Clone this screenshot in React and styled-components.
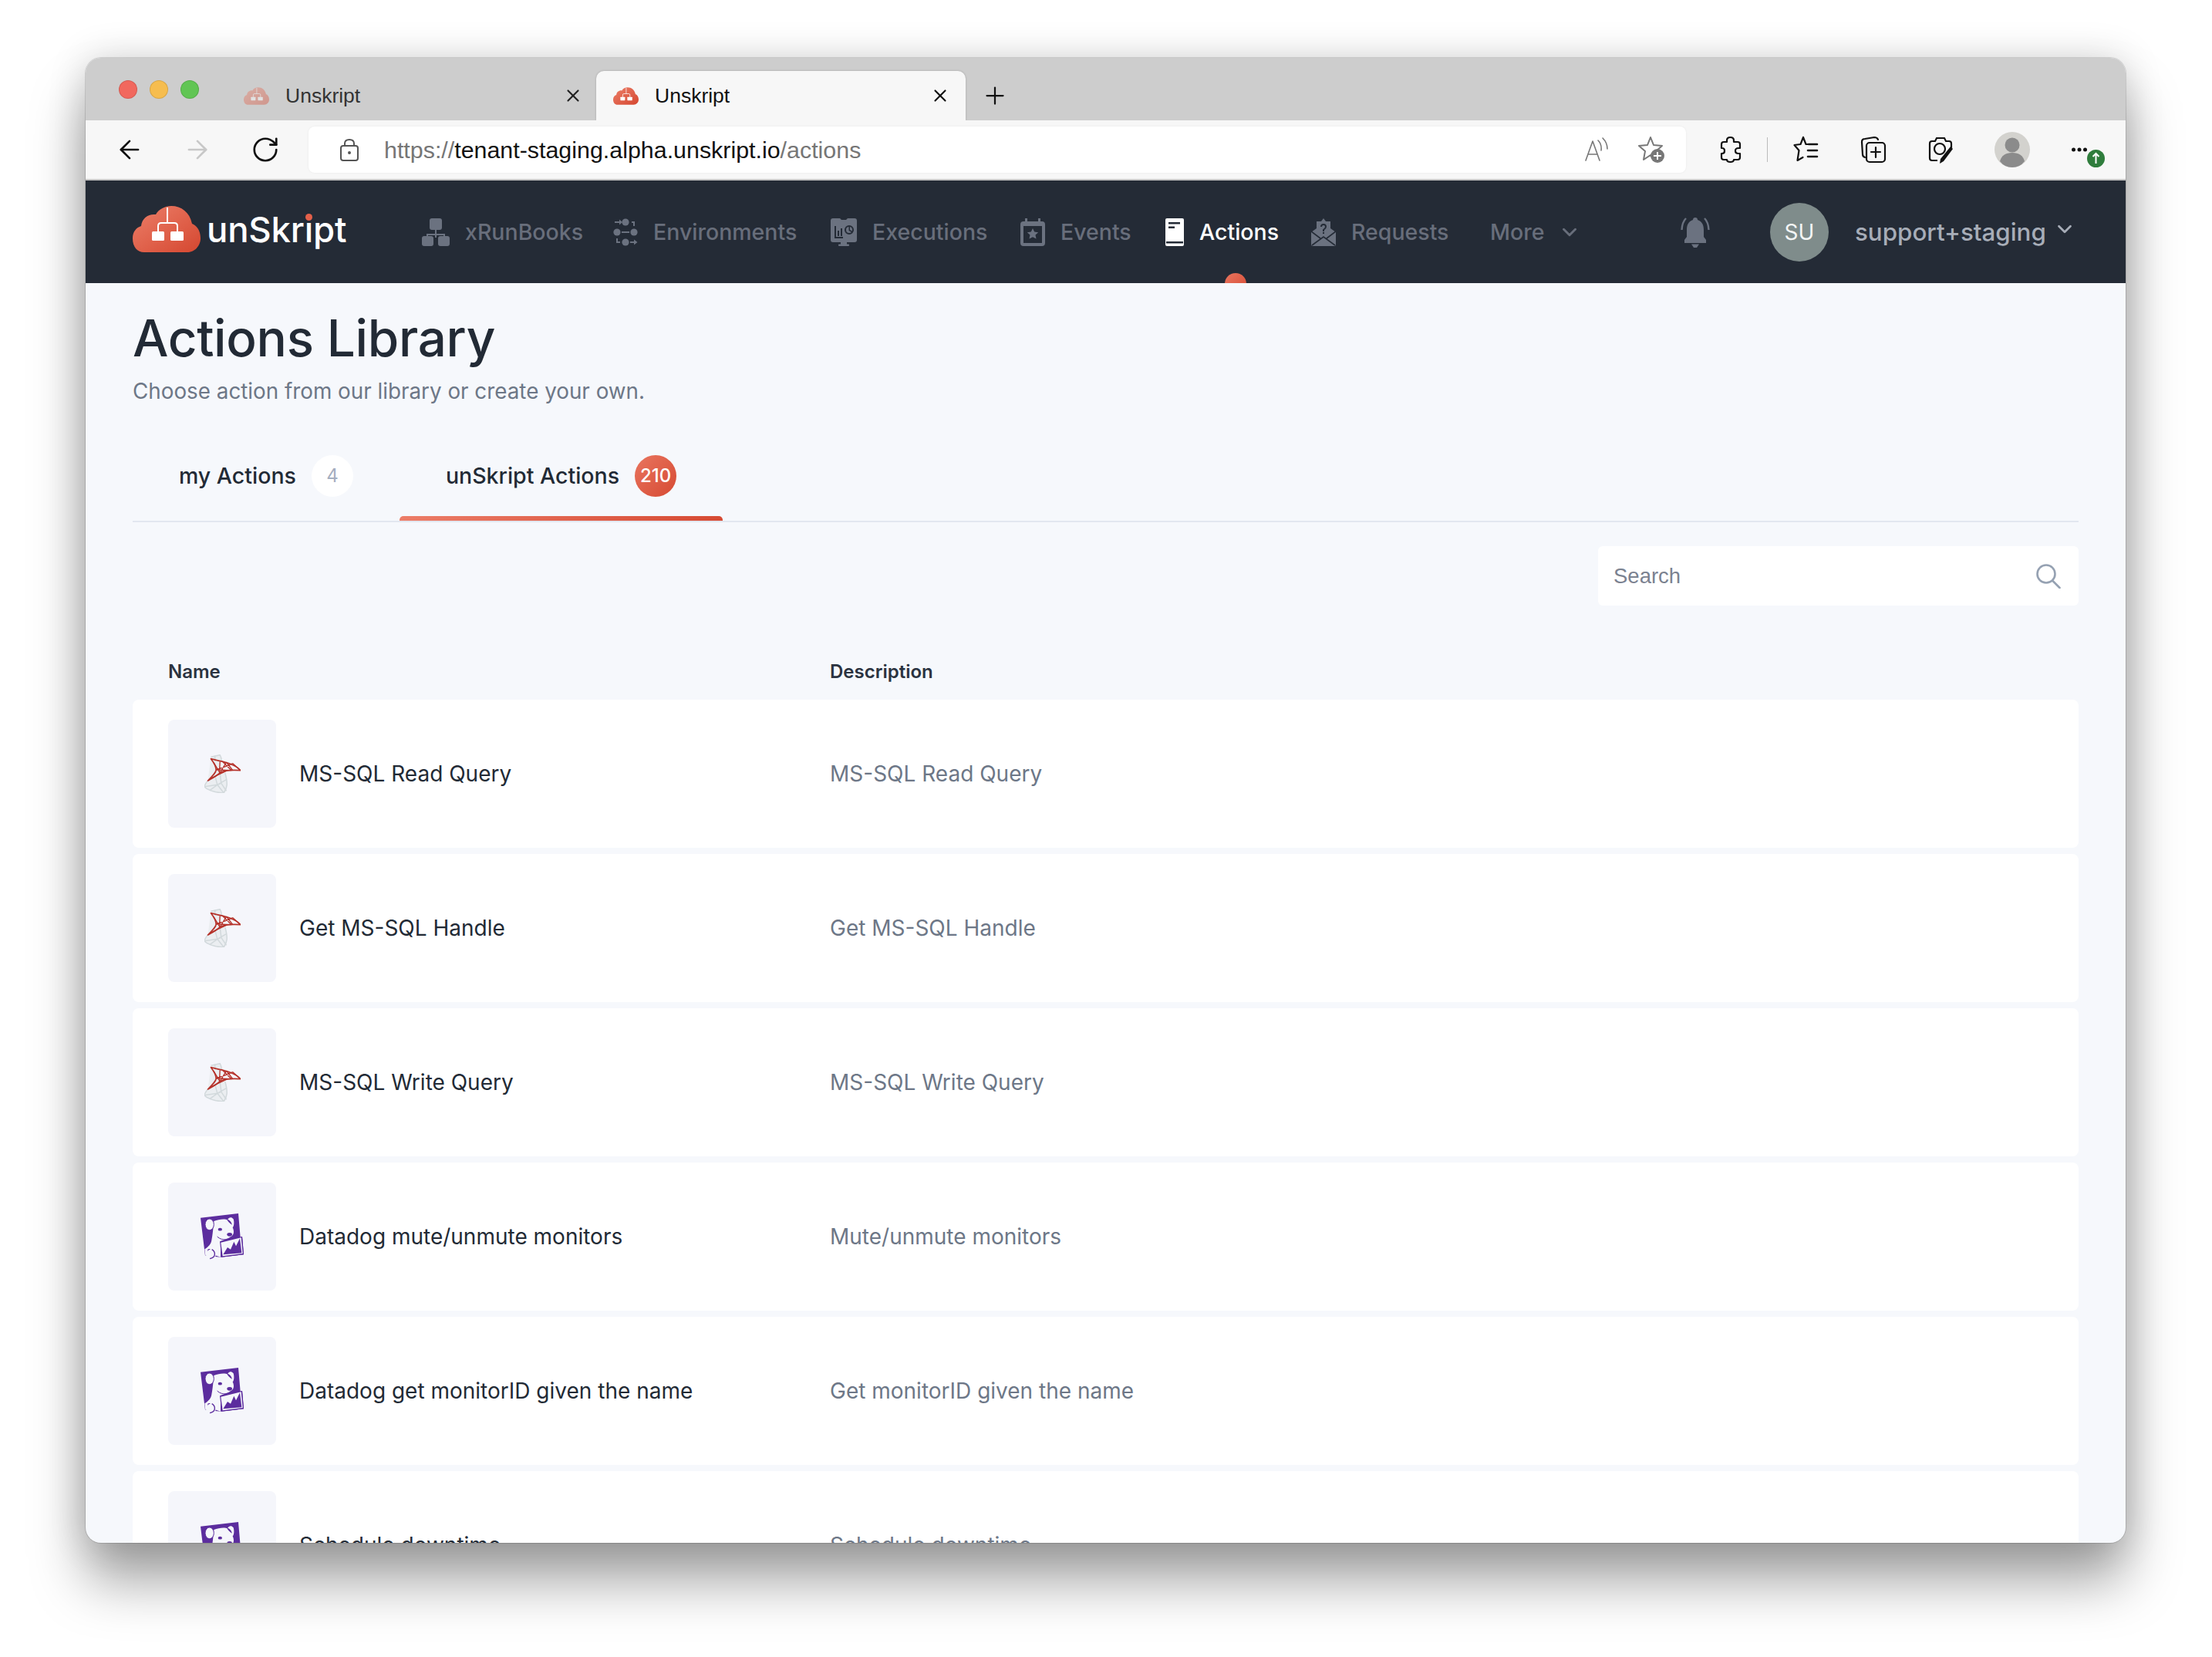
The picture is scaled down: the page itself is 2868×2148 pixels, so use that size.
import React from 'react'
import styled, { createGlobalStyle } from 'styled-components'
import { ArrowLeft, ArrowRight, RotateCw, X, Plus, ChevronDown } from 'lucide-react'

const GlobalStyle = createGlobalStyle`
  html, body { margin: 0; padding: 0; background: #fff; }
  * { box-sizing: border-box; }
  body { font-family: Inter, "Liberation Sans", sans-serif; }
`

const Stage = styled.div`
  width: 2868px;
  height: 2148px;
  padding: 75px 112px 0 111px;
  overflow: hidden;
  background: #fff;
`

const Window = styled.div`
  width: 2645px;
  height: 1925px;
  border-radius: 20px;
  overflow: hidden;
  display: flex;
  flex-direction: column;
  background: #f6f8fc;
  box-shadow: 0 0 0 1px rgba(0, 0, 0, 0.12), 0 50px 70px rgba(0, 0, 0, 0.36), 0 0 50px rgba(0, 0, 0, 0.16);
`

const TabStrip = styled.div`
  height: 81px;
  flex: none;
  background: #cdcdcd;
  display: flex;
  align-items: flex-end;
`

const Lights = styled.div`
  width: 183px;
  height: 81px;
  flex: none;
  display: flex;
  gap: 16px;
  padding: 29px 0 0 43px;
`

const Light = styled.span`
  width: 24px;
  height: 24px;
  border-radius: 50%;
  background: ${(p) => p.$color};
  border: 1px solid rgba(0, 0, 0, 0.12);
`

const Tab = styled.div`
  width: 479px;
  height: 64px;
  flex: none;
  display: flex;
  align-items: center;
  padding: 0 ${(p) => (p.$active ? '20px' : '17px')} 0 22px;
  gap: 21px;
  border-radius: 10px 10px 0 0;
  background: ${(p) => (p.$active ? '#f7f7f7' : 'transparent')};
  box-shadow: ${(p) => (p.$active ? '0 0 3px rgba(0, 0, 0, 0.2)' : 'none')};
  color: ${(p) => (p.$active ? '#111' : '#333')};
  font-family: "Liberation Sans", sans-serif;
  font-size: 26.5px;
  svg { flex: none; }
  span { flex: 1; }
`

const NewTab = styled.div`
  margin-left: 20px;
  height: 64px;
  display: flex;
  align-items: center;
  color: #111;
`

const Toolbar = styled.div`
  height: 78px;
  flex: none;
  background: #f7f7f7;
  border-bottom: 2px solid #c6c6c6;
  display: flex;
  align-items: center;
  padding-left: 38px;
`

const NavButton = styled.div`
  width: 88px;
  flex: none;
  color: ${(p) => (p.$off ? '#c8c8c8' : '#111')};
  display: flex;
`

const UrlBar = styled.div`
  width: 1786px;
  height: 60px;
  flex: none;
  margin-left: -13px;
  background: #fff;
  border-radius: 8px;
  box-shadow: 0 0 3px rgba(0, 0, 0, 0.06);
  display: flex;
  align-items: center;
  padding: 0 28px 0 40px;
  font-family: "Liberation Sans", sans-serif;
  font-size: 30.4px;
  color: #767676;
`

const UrlText = styled.div`
  flex: 1;
  margin-left: 32px;
  b { font-weight: 400; color: #111; }
`

const ToolIcons = styled.div`
  flex: 1;
  display: flex;
  align-items: center;
  padding-left: 42px;
`

const ToolIcon = styled.div`
  width: ${(p) => p.$w || 88}px;
  display: flex;
  flex: none;
`

const ToolSep = styled.span`
  width: 1px;
  height: 32px;
  background: #bbb;
  flex: none;
  margin: 0 32px 0 0;
`

const Header = styled.header`
  height: 133px;
  flex: none;
  background: #242b36;
  display: flex;
  align-items: center;
  padding-left: 61px;
  overflow: hidden;
`

const Logo = styled.div`
  display: flex;
  align-items: center;
  gap: 8px;
  width: 375px;
  flex: none;
  margin-top: -7px;
`

const LogoWord = styled.span`
  font-size: 45.5px;
  font-weight: 500;
  color: #fff;
  letter-spacing: -0.2px;
  em {
    font-style: normal;
    position: relative;
  }
  em::after {
    content: '';
    position: absolute;
    left: 1px;
    top: 7px;
    width: 9px;
    height: 9px;
    border-radius: 50%;
    background: #e4604a;
  }
`

const Nav = styled.nav`
  display: flex;
  align-items: center;
`

const NavItem = styled.div`
  position: relative;
  display: flex;
  align-items: center;
  gap: ${(p) => p.$gap || 20}px;
  width: ${(p) => p.$w}px;
  height: 36px;
  flex: none;
  font-size: 28.5px;
  font-weight: 500;
  color: ${(p) => (p.$active ? '#fff' : '#686e7b')};
  svg { flex: none; }
`

const NavDot = styled.span`
  position: absolute;
  left: 77px;
  top: 71px;
  width: 28px;
  height: 28px;
  border-radius: 50%;
  background: linear-gradient(135deg, #e9755f, #d64a33);
`

const Bell = styled.div`
  display: flex;
  margin-left: 113px;
  width: 116px;
  flex: none;
`

const Avatar = styled.div`
  width: 76px;
  height: 76px;
  border-radius: 50%;
  flex: none;
  background: #7f8c8b;
  color: #f3f5f5;
  font-size: 28px;
  display: flex;
  align-items: center;
  justify-content: center;
`

const UserName = styled.div`
  margin-left: 34px;
  font-size: 31.3px;
  font-weight: 500;
  color: #a7adb8;
  display: flex;
  align-items: center;
  gap: 9px;
  svg { margin-top: -8px; }
`

const Main = styled.main`
  padding: 34px 61px 0;
`

const Title = styled.h1`
  margin: 0;
  font-size: 65.5px;
  line-height: 76px;
  font-weight: 500;
  color: #222a35;
  letter-spacing: -0.3px;
`

const Subtitle = styled.p`
  margin: 12px 0 0;
  font-size: 27.8px;
  line-height: 36px;
  color: #6d7787;
`

const Tabs = styled.div`
  display: flex;
  margin-top: 49px;
  height: 103px;
  border-bottom: 2px solid #e2e7f0;
`

const TabItem = styled.div`
  position: relative;
  display: flex;
  align-items: center;
  gap: 20px;
  height: 101px;
  padding: 0 60px 16px;
  font-size: 28.5px;
  font-weight: 500;
  color: #222a35;
  &::after {
    content: '';
    display: ${(p) => (p.$active ? 'block' : 'none')};
    position: absolute;
    left: 0;
    right: 0;
    bottom: 0;
    height: 6px;
    border-radius: 5px 5px 0 0;
    background: linear-gradient(90deg, #ec7d68, #d64a33);
  }
`

const Badge = styled.span`
  width: 54px;
  height: 54px;
  border-radius: 50%;
  display: flex;
  align-items: center;
  justify-content: center;
  font-size: 24px;
  font-weight: ${(p) => (p.$active ? 500 : 400)};
  color: ${(p) => (p.$active ? '#fff' : '#a4aec0')};
  background: ${(p) => (p.$active ? 'linear-gradient(135deg, #e9755f, #d64a33)' : '#fff')};
`

const SearchRow = styled.div`
  display: flex;
  justify-content: flex-end;
  margin-top: 31px;
`

const SearchBox = styled.div`
  width: 623px;
  height: 77px;
  background: #fff;
  border-radius: 6px;
  display: flex;
  align-items: center;
  justify-content: space-between;
  padding: 0 23px 0 20px;
  font-family: "Liberation Sans", sans-serif;
  font-size: 27.5px;
  color: #7b8290;
`

const TableHead = styled.div`
  display: grid;
  grid-template-columns: 858px 1fr;
  padding-left: 46px;
  margin-top: 71px;
  height: 51px;
  font-size: 24px;
  font-weight: 600;
  line-height: 30px;
  color: #2b3340;
`

const Rows = styled.div`
  display: flex;
  flex-direction: column;
  gap: 8px;
`

const Row = styled.div`
  display: grid;
  grid-template-columns: 140px 718px 1fr;
  align-items: center;
  height: 192px;
  flex: none;
  padding: 0 46px;
  background: #fff;
  border-radius: 8px;
  font-size: 28px;
`

const IconTile = styled.div`
  width: 140px;
  height: 140px;
  border-radius: 8px;
  background: #f5f6fb;
  display: flex;
  align-items: center;
  justify-content: center;
`

const RowName = styled.div`
  padding-left: 30px;
  color: #222a35;
`

const RowDesc = styled.div`
  color: #6d7787;
`

const Cloud = ({ w = 88, h = 60, id = 'cg', opacity = 1, glyph = '#fff' }) => (
  <svg width={w} height={h} viewBox="0 0 88 60" style={{ opacity }}>
    <defs>
      <linearGradient id={id} x1="0" y1="0" x2="1" y2="1">
        <stop offset="0" stopColor="#ec7f69" />
        <stop offset="1" stopColor="#d54730" />
      </linearGradient>
    </defs>
    <path fill={`url(#${id})`} d="M15 60C6 60 0 53 0 42c0-9 5-14 11-16 1-10 9-16 19-15C34 4 42 0 50 0c13 0 24 8 27 23 7 3 11 10 11 19 0 10-8 18-17 18z" />
    <path fill="none" stroke={glyph} strokeWidth="2" d="M45 2v20M33 34v-8q0-4 4-4h17q4 0 4 4v8" />
    <rect x="25" y="33" width="16" height="12" rx="1.500" fill={glyph} />
    <rect x="49" y="33" width="17" height="12" rx="1.500" fill={glyph} />
  </svg>
)

const RunbookIcon = () => (
  <svg width="36" height="36" viewBox="0 0 36 36" fill="#6b7280">
    <rect x="10" y="0" width="16" height="15" rx="3" />
    <path d="M17 15h2v5h11v5h-2v-3H19v3h-2v-3H8v3H6v-5h11z" />
    <rect x="0" y="23" width="15" height="13" rx="3" />
    <rect x="21" y="23" width="15" height="13" rx="3" />
  </svg>
)

const EnvIcon = () => (
  <svg width="32" height="36" viewBox="0 0 32 36" fill="#6b7280">
    <circle cx="16" cy="5" r="4.600" />
    <circle cx="5" cy="18" r="4.600" />
    <circle cx="27" cy="18" r="4.600" />
    <circle cx="16" cy="31" r="4.600" />
    <path d="M2 4h6V1.500L12 5l-4 3.500V6H2zM11 17h10v2H11zM22 30h5v-2.500L31.500 31 27 34.500V32h-5z" />
    <path d="M24 4h4v6h-2V6h-2zM4 26h2v4h3v2H4z" />
  </svg>
)

const ExecIcon = () => (
  <svg width="34" height="36" viewBox="0 0 34 36" fill="#6b7280">
    <path d="M3 0h9l2 2h6l2-2h9q3 0 3 3v25q0 3-3 3H3q-3 0-3-3V3q0-3 3-3z" />
    <rect x="13" y="31" width="8" height="3" />
    <rect x="10" y="33.500" width="14" height="2.500" rx="1" />
    <path fill="#242b36" d="M5 10h2v14h9v2H5zM9 16h2v7H9zM13 13h2v10h-2z" />
    <circle cx="24" cy="15" r="5" fill="none" stroke="#242b36" strokeWidth="2" />
    <path fill="#242b36" d="M23.500 10.500h1.500V15l3.500 2-1 1.300-4-2.300z" />
  </svg>
)

const EventIcon = () => (
  <svg width="32" height="36" viewBox="0 0 32 36">
    <path fill="#6b7280" d="M6 0h3v4h14V0h3v4h2q4 0 4 4v24q0 4-4 4H4q-4 0-4-4V8q0-4 4-4h2z" />
    <rect x="4" y="10" width="24" height="22" fill="#242b36" />
    <path fill="#6b7280" d="M16 13l2.200 4.600 5 .6-3.700 3.400 1 5L16 24.200 11.500 26.600l1-5-3.700-3.400 5-.6z" />
  </svg>
)

const BookIcon = () => (
  <svg width="24" height="36" viewBox="0 0 24 36">
    <rect width="24" height="36" rx="2" fill="#fff" />
    <rect x="4" y="5" width="15" height="2.500" fill="#242b36" />
    <rect x="4" y="10.500" width="8" height="2.500" fill="#242b36" />
    <rect x="1" y="30" width="22" height="2.500" fill="#242b36" />
  </svg>
)

const RequestIcon = () => (
  <svg width="32" height="36" viewBox="0 0 32 36" fill="#6b7280">
    <path d="M16 0l3 4h6v9l7 5v16q0 2-2 2H2q-2 0-2-2V18l7-5V4h6z" />
    <path fill="none" stroke="#242b36" strokeWidth="1.600" d="M0 17l12 9M32 17L20 26M1 35l15-11 15 11" />
    <path fill="none" stroke="#242b36" strokeWidth="2" d="M13 11q0-3 3-3t3 3q0 2-3 4v2" />
    <rect x="15" y="18" width="2" height="2" fill="#242b36" />
  </svg>
)

const BellIcon = () => (
  <svg width="38" height="40" viewBox="0 0 38 40" fill="#6b7280">
    <path d="M19 1q3 0 3 3c6 2 8 7 8 13v9l3 4v4H5v-4l3-4v-9c0-6 2-11 8-13q0-3 3-3z" />
    <path d="M14 35.500h10l-3 4.500h-4z" />
    <path fill="none" stroke="#6b7280" strokeWidth="2.400" d="M7 2Q2 7 1.500 17M31 2q5 5 5.500 15" />
  </svg>
)

const SearchGlass = () => (
  <svg width="32" height="32" viewBox="0 0 32 32" fill="none" stroke="#95a1b2" strokeWidth="2.600" strokeLinecap="round">
    <circle cx="13" cy="13" r="11.500" />
    <path d="M21.500 22l9 9" />
  </svg>
)

const SqlIcon = () => (
  <svg width="47" height="50" viewBox="0 0 140 150" fill="none" strokeLinejoin="round">
    <path fill="#ebeef1" d="M25 10L60 2l7 26-7 44 20 0c12 43 8 58-5 78-40-2-70-15-75-25 0-7 5-13 13-23z" />
    <g stroke="#d2d9dc" strokeWidth="4.500">
      <path d="M25 10L60 2c6 10 6 18 7 26M13 102C5 112 0 118 0 125c5 10 35 23 75 25 13-20 17-35 5-78" />
      <path d="M42 88l8 30L20 140M50 118l25 32M0 125l50-7 35-20M60 72l5 40-15 6M65 112l20 30M40 5l2 22" />
    </g>
    <g stroke="#b5322a" strokeWidth="5">
      <path d="M25 17c35 11 85 13 115 45-30-2-65 0-80 10-15 13-35 23-47 30 22-22 32-32 32-42 0-15-10-30-20-43z" />
      <path d="M45 60c30-10 55-20 65-25M36 32l24 40M60 28l-2 44M85 30L60 72M85 30l25 32M110 35l30 27M45 60l60 2M30 90l60-28M70 28l35 34" strokeWidth="4" />
    </g>
  </svg>
)

const DogIcon = () => (
  <svg width="56" height="60" viewBox="0 0 168 180">
    <path fill="#5c2d9e" d="M0 17L147 0l8 92 7-2 6 70-88 10-62-6z" />
    <path fill="#f5f6fb" d="M52 30c18-8 43-10 53-5 5-10 15-13 23-3 4 13 2 28-3 33 7 15 5 30-7 35l-8 5-32 13v62l-30-10c-5-20-13-25-20-20l-4 24-5 0-3-25c15-10 25-20 27-35 2-10 5-30 9-74z" />
    <ellipse cx="35" cy="43" rx="17" ry="22" fill="#f5f6fb" stroke="#5c2d9e" strokeWidth="3" />
    <path fill="#5c2d9e" d="M103 24c6-2 15 4 20 20-8-4-15-10-20-20z" />
    <ellipse cx="76" cy="62" rx="8" ry="5.500" fill="#5c2d9e" />
    <ellipse cx="113" cy="82" rx="10" ry="7" fill="#5c2d9e" />
    <path fill="none" stroke="#5c2d9e" strokeWidth="3" d="M65 90c10 10 25 14 40 10" />
    <path fill="#5c2d9e" d="M75 109l87-19 6 70-86 10z" />
    <path fill="#f5f6fb" d="M79 113l79-19 6 62-78 10z" />
    <path fill="#5c2d9e" d="M88 160l17-28 12 8 13-30 8 17 15-30 7 57z" />
    <path fill="#f5f6fb" d="M24 150c10-14 30-14 35 2 4 16-8 28-24 26-10-3-17-16-11-28z" />
    <path fill="none" stroke="#5c2d9e" strokeWidth="4" d="M44 140c16 10 16 32-8 36" />
  </svg>
)

const StrokeIcon = ({ children, w = 34, h = 36, color = '#111', sw = 2.200 }) => (
  <svg width={w} height={h} viewBox={`0 0 ${w} ${h}`} fill="none" stroke={color} strokeWidth={sw} strokeLinejoin="round" strokeLinecap="round">
    {children}
  </svg>
)

const rows = [
  { name: 'MS-SQL Read Query', desc: 'MS-SQL Read Query', icon: <SqlIcon /> },
  { name: 'Get MS-SQL Handle', desc: 'Get MS-SQL Handle', icon: <SqlIcon /> },
  { name: 'MS-SQL Write Query', desc: 'MS-SQL Write Query', icon: <SqlIcon /> },
  { name: 'Datadog mute/unmute monitors', desc: 'Mute/unmute monitors', icon: <DogIcon /> },
  { name: 'Datadog get monitorID given the name', desc: 'Get monitorID given the name', icon: <DogIcon /> },
  { name: 'Schedule downtime', desc: 'Schedule downtime', icon: <DogIcon /> },
]

const navItems = [
  { label: 'xRunBooks', icon: <RunbookIcon />, w: 248 },
  { label: 'Environments', icon: <EnvIcon />, w: 282 },
  { label: 'Executions', icon: <ExecIcon />, w: 246 },
  { label: 'Events', icon: <EventIcon />, w: 188 },
]

export default function App() {
  return (
    <>
      <GlobalStyle />
      <Stage>
        <Window>
          <TabStrip>
            <Lights>
              <Light $color="#f1685e" />
              <Light $color="#f6bd4f" />
              <Light $color="#61c554" />
            </Lights>
            <Tab>
              <Cloud w={33} h={23} id="tabA" opacity={0.4} />
              <span>Unskript</span>
              <X size={26} strokeWidth={2} color="#222" />
            </Tab>
            <Tab $active>
              <Cloud w={33} h={23} id="tabB" />
              <span>Unskript</span>
              <X size={26} strokeWidth={2} color="#111" />
            </Tab>
            <NewTab><Plus size={36} strokeWidth={1.500} /></NewTab>
          </TabStrip>
          <Toolbar>
            <NavButton><ArrowLeft size={38} strokeWidth={1.700} /></NavButton>
            <NavButton $off><ArrowRight size={38} strokeWidth={1.700} /></NavButton>
            <NavButton><RotateCw size={38} strokeWidth={1.700} /></NavButton>
            <UrlBar>
              <StrokeIcon w={26} h={30} color="#555" sw={2}>
                <rect x="2" y="10" width="22" height="19" rx="3" />
                <path d="M7 10V7q0-5 6-5t6 5v3" />
                <circle cx="13" cy="19" r="1" fill="#555" />
              </StrokeIcon>
              <UrlText>https://<b>tenant-staging.alpha.unskript.io</b>/actions</UrlText>
              <ToolIcon $w={70}>
                <StrokeIcon w={32} h={32} color="#777" sw={1.600}>
                  <path d="M2 30L11 5l9 25M5 22h12M18 4q5 5 4 13M24 1q6 6 6 14" />
                </StrokeIcon>
              </ToolIcon>
              <ToolIcon $w={34}>
                <svg width="34" height="36" viewBox="0 0 34 36" fill="none">
                  <path stroke="#777" strokeWidth="2" strokeLinejoin="round" d="M16 2l4 10 11 1-8 7 2 11-9-6-9 6 2-11-8-7 11-1z" />
                  <circle cx="25" cy="26" r="9" fill="#777" />
                  <path stroke="#fff" strokeWidth="2" d="M25 21v10M20 26h10" />
                </svg>
              </ToolIcon>
            </UrlBar>
            <ToolIcons>
              <ToolIcon $w={63}>
                <StrokeIcon w={32} h={36}>
                  <path d="M11 6q0-4 4.500-4T20 6v2h5q3 0 3 3v5h-2q-4 0-4 3.500t4 3.500h2v5q0 3-3 3h-5v0q0 3-4.500 3T11 31v0H7q-3 0-3-3v-5h1q3 0 3-3.500T5 16H4v-5q0-3 3-3h4z" />
                </StrokeIcon>
              </ToolIcon>
              <ToolSep />
              <ToolIcon $w={88}>
                <StrokeIcon w={34} h={36}>
                  <path d="M14 2l3.500 9H21M14 2l-3.500 9-8 1 6 7-2 13 7-4" />
                  <path d="M21 11h11M20 19h12M20 27h12" strokeWidth={2.600} />
                </StrokeIcon>
              </ToolIcon>
              <ToolIcon $w={88}>
                <StrokeIcon w={34} h={36}>
                  <path d="M6 28q-3-1-3-4L2 8q0-4 4-4l12-2q4 0 5 3" />
                  <rect x="8" y="9" width="24" height="25" rx="4" />
                  <path d="M20 15v13M14 21h12" />
                </StrokeIcon>
              </ToolIcon>
              <ToolIcon $w={86}>
                <svg width="32" height="36" viewBox="0 0 32 36" fill="none" stroke="#111" strokeWidth="2.200">
                  <path d="M2 29V10q0-3 3-3h4l2-4h10l2 4h4q3 0 3 3v6" />
                  <path d="M2 29q0 3 3 3h7" />
                  <circle cx="15" cy="17" r="7" />
                  <path fill="#111" stroke="none" d="M29 14l3 3-12 16-5 3 1-6z" />
                </svg>
              </ToolIcon>
              <ToolIcon $w={100}>
                <svg width="46" height="46" viewBox="0 0 46 46">
                  <circle cx="23" cy="23" r="23" fill="#d3d2ce" />
                  <circle cx="23" cy="17" r="9.500" fill="#8b8b8b" />
                  <path fill="#8b8b8b" d="M7 38q3-11 16-11t16 11q-6 8-16 8T7 38z" />
                </svg>
              </ToolIcon>
              <ToolIcon $w={44}>
                <svg width="44" height="46" viewBox="0 0 44 46">
                  <circle cx="2.500" cy="23" r="2.500" fill="#111" />
                  <circle cx="10" cy="23" r="2.500" fill="#111" />
                  <circle cx="17.500" cy="23" r="2.500" fill="#111" />
                  <circle cx="31.500" cy="34.500" r="11.500" fill="#2f7d3c" />
                  <path stroke="#fff" strokeWidth="2" fill="none" d="M31.500 41V28M27.500 32l4-4 4 4" />
                </svg>
              </ToolIcon>
            </ToolIcons>
          </Toolbar>
          <Header>
            <Logo>
              <Cloud id="logo" />
              <LogoWord>unSkr<em>i</em>pt</LogoWord>
            </Logo>
            <Nav>
              {navItems.map((item) => (
                <NavItem key={item.label} $w={item.w}>
                  {item.icon}
                  {item.label}
                </NavItem>
              ))}
              <NavItem $w={189} $active>
                <BookIcon />
                Actions
                <NavDot />
              </NavItem>
              <NavItem $w={232}>
                <RequestIcon />
                Requests
              </NavItem>
              <NavItem $w={134} $gap={18}>
                More
                <ChevronDown size={30} strokeWidth={2.400} />
              </NavItem>
            </Nav>
            <Bell><BellIcon /></Bell>
            <Avatar>SU</Avatar>
            <UserName>
              support+staging
              <ChevronDown size={30} strokeWidth={2.200} />
            </UserName>
          </Header>
          <Main>
            <Title>Actions Library</Title>
            <Subtitle>Choose action from our library or create your own.</Subtitle>
            <Tabs>
              <TabItem>my Actions<Badge>4</Badge></TabItem>
              <TabItem $active>unSkript Actions<Badge $active>210</Badge></TabItem>
            </Tabs>
            <SearchRow>
              <SearchBox>
                Search
                <SearchGlass />
              </SearchBox>
            </SearchRow>
            <TableHead>
              <div>Name</div>
              <div>Description</div>
            </TableHead>
            <Rows>
              {rows.map((row) => (
                <Row key={row.name}>
                  <IconTile>{row.icon}</IconTile>
                  <RowName>{row.name}</RowName>
                  <RowDesc>{row.desc}</RowDesc>
                </Row>
              ))}
            </Rows>
          </Main>
        </Window>
      </Stage>
    </>
  )
}
